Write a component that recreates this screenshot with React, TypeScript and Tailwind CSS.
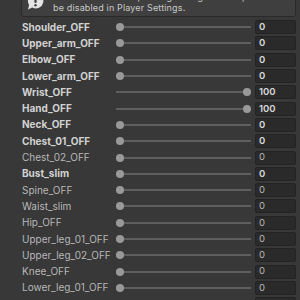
import React from 'react';

const rows = [
  { name: 'Shoulder_OFF', value: 0, bold: true },
  { name: 'Upper_arm_OFF', value: 0, bold: true },
  { name: 'Elbow_OFF', value: 0, bold: true },
  { name: 'Lower_arm_OFF', value: 0, bold: true },
  { name: 'Wrist_OFF', value: 100, bold: true },
  { name: 'Hand_OFF', value: 100, bold: true },
  { name: 'Neck_OFF', value: 0, bold: true },
  { name: 'Chest_01_OFF', value: 0, bold: true },
  { name: 'Chest_02_OFF', value: 0, bold: false },
  { name: 'Bust_slim', value: 0, bold: true },
  { name: 'Spine_OFF', value: 0, bold: false },
  { name: 'Waist_slim', value: 0, bold: false },
  { name: 'Hip_OFF', value: 0, bold: false },
  { name: 'Upper_leg_01_OFF', value: 0, bold: false },
  { name: 'Upper_leg_02_OFF', value: 0, bold: false },
  { name: 'Knee_OFF', value: 0, bold: false },
  { name: 'Lower_leg_01_OFF', value: 0, bold: false },
  { name: 'Lower_leg_02_OFF', value: 0, bold: false },
];

const InfoIcon = () => (
  <svg width="19" height="19" viewBox="0 0 19 19" className="shrink-0">
    <path d="M9.5 1.5a7.5 7.5 0 0 0-6.4 11.4L2 17.5l4.3-1.9A7.5 7.5 0 1 0 9.5 1.5z" fill="#e4e4e4" />
    <rect x="8.4" y="4.5" width="2.2" height="6.5" rx="1" fill="#3e3e3e" />
    <circle cx="9.5" cy="13.3" r="1.2" fill="#3e3e3e" />
  </svg>
);

const Slider = ({ value }: { value: number }) => (
  <div className="relative flex-1 h-full flex items-center">
    <div className="w-full h-[2px] bg-[#5e5e5e]" />
    {/* thumb sits over the track */}
    <div
      className="absolute top-1/2 -translate-y-1/2 w-[8px] h-[8px] rounded-full bg-[#999999]"
      style={{ left: value >= 100 ? 'calc(100% - 8px)' : `calc(${value}% * 0.94)` }}
    />
  </div>
);

export default function App() {
  return (
    <div
      className="w-[300px] h-[300px] overflow-hidden bg-[#383838] pl-[21px] pr-[4px]"
      style={{ fontFamily: 'Inter, "Noto Sans", sans-serif' }}
    >
      <div className="-mt-[14px] h-[31px] flex items-center gap-[8px] pl-[4px] pr-2 bg-[#3f3f3f] border border-[#2a2a2a] rounded-[3px]">
        <InfoIcon />
        <div className="text-[9px] leading-[11px] text-[#c8c8c8] tracking-[0.15px] whitespace-nowrap">
          <div>Note that BlendShape weight range is clamped. This can</div>
          <div>be disabled in Player Settings.</div>
        </div>
      </div>
      <div className="mt-[2px]">
        {rows.map((r) => (
          <div key={r.name} className="h-[16.3px] flex items-center">
            <div
              className={`w-[95px] pl-[1px] text-[10px] whitespace-nowrap ${r.bold ? 'font-bold text-[#d2d2d2]' : 'font-normal text-[#b7b7b7]'}`}
            >
              {r.name}
            </div>
            <Slider value={r.value} />
            <div className="ml-[4px] w-[41px] h-[14px] rounded-[2px] bg-[#2a2a2a] border border-[#232323] flex items-center pl-[3px]">
              <span className={`text-[9.5px] ${r.bold ? 'font-semibold text-[#dadada]' : 'text-[#b7b7b7]'}`}>
                {r.value}
              </span>
            </div>
          </div>
        ))}
      </div>
    </div>
  );
}
